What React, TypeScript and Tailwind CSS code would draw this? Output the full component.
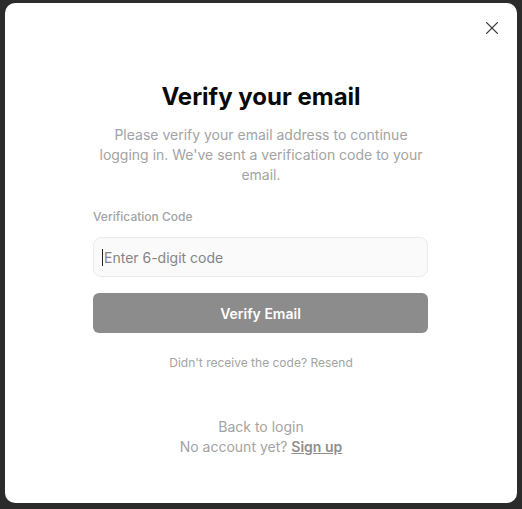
import { X } from "lucide-react";

export default function App() {
    return (
        <div className="w-[522px] h-[509px] bg-[#2b2b2b] pt-[3px] pl-[5px]" style={{ fontFamily: "Inter, 'Noto Sans', sans-serif" }}>
            <div className="relative w-[512px] h-[500px] bg-white rounded-[10px] flex flex-col items-center pt-[78px]">
                {/* Close */}
                <button className="absolute top-[14px] right-[14px] w-[22px] h-[22px] flex items-center justify-center text-[#3f3f3f]">
                    <X className="w-[22px] h-[22px]" strokeWidth={1.2} />
                </button>

                <h1 className="text-[24px] leading-8 font-bold text-[#0a0a0a]">Verify your email</h1>
                <p className="mt-3 w-[340px] text-center text-[14px] leading-5 text-[#a3a3a3]">
                    Please verify your email address to continue logging in. We've sent a verification code to your email.
                </p>

                <div className="mt-6 w-[335px] ml-[-1px] flex flex-col">
                    <label className="text-[12px] leading-4 font-medium text-[#a3a3a3] mb-3">Verification Code</label>
                    <div className="h-10 rounded-lg border border-[#ebebeb] bg-[#fafafa] flex items-center px-2">
                        <span className="w-px h-[17px] bg-[#222] mr-px" />
                        <span className="text-[14px] text-[#858585]">Enter 6-digit code</span>
                    </div>
                    <button className="mt-4 h-10 rounded-md bg-[#8c8c8c] text-white text-[14px] font-semibold">Verify Email</button>
                </div>

                <p className="mt-[22px] text-[12px] leading-4 text-[#a3a3a3]">Didn't receive the code? Resend</p>

                <div className="mt-[46px] flex flex-col items-center text-[14px] leading-5 text-[#a3a3a3]">
                    <span>Back to login</span>
                    <span>
                        No account yet? <span className="font-semibold underline text-[#8f8f8f]">Sign up</span>
                    </span>
                </div>
            </div>
        </div>
    );
}
